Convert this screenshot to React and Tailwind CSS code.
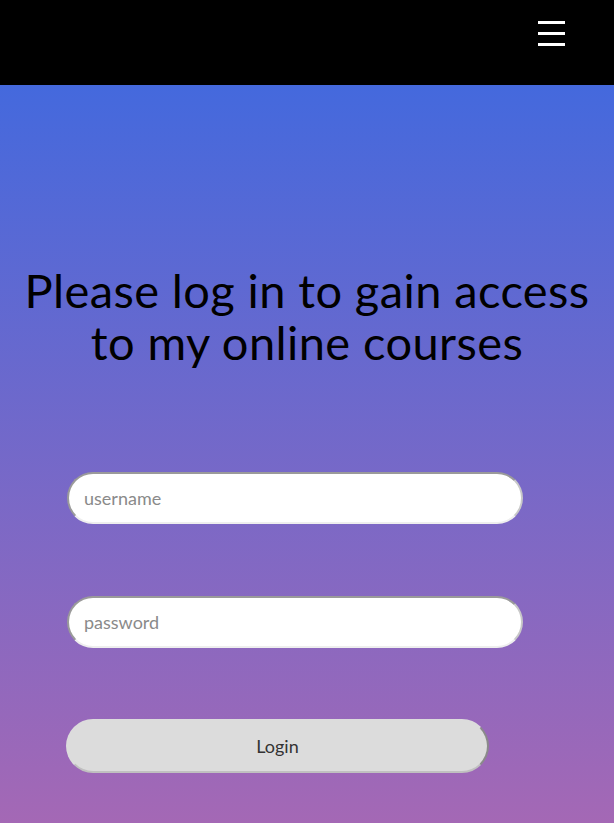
const App = () => {
  return (
    <div className="min-h-[823px] flex flex-col font-['Lato',sans-serif] bg-[linear-gradient(to_bottom,#4469dd_84px,#a468b5_823px)]">
      {/* top bar */}
      <header className="h-[85px] bg-black flex justify-end items-start shrink-0">
        <div className="mr-[49px] mt-[21px] flex flex-col gap-[8px]">
          <span className="block w-[27px] h-[3px] bg-white"></span>
          <span className="block w-[27px] h-[3px] bg-white"></span>
          <span className="block w-[27px] h-[3px] bg-white"></span>
        </div>
      </header>

      <main className="flex flex-col items-center">
        <h1 className="mt-[179px] text-center text-black text-[47px] leading-[52px] font-normal tracking-[0.4px]">
          Please log in to gain access
          <br />
          to my online courses
        </h1>

        <form className="mt-[104px] w-full pl-[67px] flex flex-col">
          <input
            type="text"
            placeholder="username"
            className="w-[456px] h-[52px] rounded-full bg-white border-2 border-t-[#9a9a9a] border-l-[#9a9a9a] border-r-[#c8c8c8] border-b-[#eeeeee] px-[15px] text-[18px] placeholder:text-[#8a8a8a] outline-none"
          />
          <input
            type="password"
            placeholder="password"
            className="mt-[72px] w-[456px] h-[52px] rounded-full bg-white border-2 border-t-[#9a9a9a] border-l-[#9a9a9a] border-r-[#c8c8c8] border-b-[#eeeeee] px-[15px] text-[18px] placeholder:text-[#8a8a8a] outline-none"
          />
          <button
            type="button"
            className="-ml-px mt-[71px] w-[423px] h-[54px] rounded-full bg-[#dcdcdc] border-2 border-t-[#dcdcdc] border-l-[#dcdcdc] border-r-[#8a8a8a] border-b-[#c0c0c0] text-[18px] text-[#333]"
          >
            Login
          </button>
        </form>
      </main>
    </div>
  );
};

export default App;
